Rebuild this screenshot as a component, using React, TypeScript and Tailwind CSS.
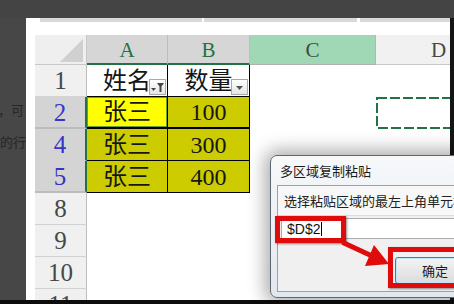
import React from "react";

const SERIF = "font-['Liberation_Serif','Noto_Sans_CJK_SC',serif]";
const CJK = "font-['Noto_Sans_CJK_SC',sans-serif]";

function RowHead({ n, sel = false, dbl = false }: { n: string; sel?: boolean; dbl?: boolean }) {
  const look = sel
    ? "bg-[#d4d4d4] text-[#3535c8] border-r-2 border-r-[#217346]"
    : "bg-[#f0f0f0] text-[#474747] border-r border-r-[#bdbdbd]";
  const bottom = dbl ? "border-b-2 border-b-[#bcbcbc]" : "border-b border-b-[#d2d2d2]";
  return (
    <div className={`w-[52px] h-full shrink-0 flex items-center justify-center ${look} ${bottom}`}>
      <span className={`${SERIF} text-[25px] leading-none`}>{n}</span>
    </div>
  );
}

function ColHead({ letter, w, kind }: { letter: string; w: string; kind: "sel" | "green" | "plain" }) {
  const look =
    kind === "sel"
      ? "bg-[#d6d6d6] text-[#217346] border-b-2 border-b-[#217346] border-r border-r-[#bdbdbd]"
      : kind === "green"
      ? "bg-[#a0d7b5] text-[#3b4f44] border-b border-b-[#b0b0b0] border-r border-r-[#b5b5b5]"
      : "bg-[#f1f1f1] text-[#474747] border-b border-b-[#c8c8c8] border-r border-r-[#c8c8c8]";
  return (
    <div className={`${w} h-full shrink-0 flex items-center justify-center ${look}`}>
      <span className={`${SERIF} text-[21px] leading-none pt-[2px]`}>{letter}</span>
    </div>
  );
}

function FilterBtn({ active }: { active?: boolean }) {
  return (
    <div className="absolute right-[1px] bottom-[1px] w-[17px] h-[16px] border border-[#a9a9a9] bg-gradient-to-b from-white to-[#e4e4e4] flex items-center justify-center">
      {active ? (
        <svg width="15" height="14" viewBox="0 0 15 14">
          <polygon points="1,8 6,8 3.5,11" fill="#444" />
          <polygon points="7,3 14,3 11.5,6.5 11.5,12 9.5,12 9.5,6.5" fill="#444" />
        </svg>
      ) : (
        <svg width="15" height="14" viewBox="0 0 15 14">
          <polygon points="4,6 11,6 7.5,10" fill="#555" />
        </svg>
      )}
    </div>
  );
}

function TCell({
  w,
  bg,
  text,
  dbl = false,
  ring = false,
  children,
}: {
  w: string;
  bg: string;
  text: string;
  dbl?: boolean;
  ring?: boolean;
  children?: React.ReactNode;
}) {
  const bottom = dbl ? "border-b-2" : "border-b";
  const r = ring ? "shadow-[inset_0_0_0_1px_#6f9a3a]" : "";
  return (
    <div className={`relative ${w} h-full shrink-0 ${bg} border-r border-r-black ${bottom} border-b-black flex items-center justify-center ${r}`}>
      <span className={`${SERIF} text-[24px] leading-none text-[#161616]`}>{text}</span>
      {children}
    </div>
  );
}

function Empty({ w, children }: { w: string; children?: React.ReactNode }) {
  return <div className={`relative ${w} h-full shrink-0 bg-white`}>{children}</div>;
}

export default function App() {
  return (
    <div className="relative w-[454px] h-[304px] overflow-hidden bg-[#474747] flex flex-col">
      <div className="h-[18px] shrink-0 bg-[#444444]" />
      <div className="flex flex-1 min-h-0">
        {/* background page text strip */}
        <div className={`w-[26px] shrink-0 overflow-hidden ${CJK} text-[13px] text-[#262626] pt-[76px]`}>
          <div className="whitespace-nowrap leading-[32px] -ml-[2px]">，可</div>
          <div className="whitespace-nowrap leading-[32px]">的行</div>
        </div>

        {/* Excel window */}
        <div className="flex-1 bg-white flex flex-col overflow-hidden">
          <div className="h-[4px] shrink-0 ml-[14px] bg-[#d9d9d9] flex">
            <div className="w-[162px] shrink-0" />
            <div className="w-[2px] shrink-0 bg-white" />
            <div className="w-[153px] shrink-0" />
            <div className="w-[3px] shrink-0 bg-white" />
          </div>
          <div className="h-[13px] shrink-0" />
          <div className="ml-[9px] flex flex-col">
            {/* column headers */}
            <div className="flex h-[30px] shrink-0">
              <div className="w-[52px] shrink-0 bg-[#efefef] border-r border-b border-[#c8c8c8] flex items-end justify-end pr-[3px] pb-[2px]">
                <svg width="23" height="23" viewBox="0 0 23 23">
                  <polygon points="23,0 23,23 0,23" fill="#d0d0d0" />
                </svg>
              </div>
              <ColHead letter="A" w="w-[81px]" kind="sel" />
              <ColHead letter="B" w="w-[82px]" kind="sel" />
              <ColHead letter="C" w="w-[126px]" kind="green" />
              <ColHead letter="D" w="w-[126px]" kind="plain" />
            </div>

            {/* row 1 */}
            <div className="flex h-[32px] shrink-0">
              <RowHead n="1" />
              <TCell w="w-[81px]" bg="bg-white" text="姓名">
                <FilterBtn active />
              </TCell>
              <TCell w="w-[82px]" bg="bg-white" text="数量">
                <FilterBtn />
              </TCell>
              <Empty w="w-[126px]" />
              <Empty w="w-[126px]" />
            </div>

            {/* row 2 */}
            <div className="flex h-[32px] shrink-0">
              <RowHead n="2" sel dbl />
              <TCell w="w-[81px]" bg="bg-[#ffff00]" text="张三" dbl ring />
              <TCell w="w-[82px]" bg="bg-[#cccc00]" text="100" dbl />
              <Empty w="w-[126px]" />
              <Empty w="w-[126px]">
                <svg className="absolute left-0 top-0" width="126" height="33" viewBox="0 0 126 33">
                  <rect x="1" y="1" width="140" height="30" fill="none" stroke="#217346" strokeWidth="2" strokeDasharray="10 3" />
                </svg>
              </Empty>
            </div>

            {/* row 4 */}
            <div className="flex h-[32px] shrink-0">
              <RowHead n="4" sel />
              <TCell w="w-[81px]" bg="bg-[#cccc00]" text="张三" />
              <TCell w="w-[82px]" bg="bg-[#cccc00]" text="300" />
              <Empty w="w-[126px]" />
              <Empty w="w-[126px]" />
            </div>

            {/* row 5 */}
            <div className="flex h-[32px] shrink-0">
              <RowHead n="5" sel dbl />
              <TCell w="w-[81px]" bg="bg-[#cccc00]" text="张三" />
              <TCell w="w-[82px]" bg="bg-[#cccc00]" text="400" />
              <Empty w="w-[126px]" />
              <Empty w="w-[126px]" />
            </div>

            {["8", "9", "10", "11"].map((n) => (
              <div key={n} className="flex h-[32px] shrink-0">
                <RowHead n={n} />
                <Empty w="w-[81px]" />
                <Empty w="w-[82px]" />
                <Empty w="w-[126px]" />
                <Empty w="w-[126px]" />
              </div>
            ))}
          </div>
        </div>
        <div className="w-[4px] shrink-0 bg-[#151515]" />
      </div>
      <div className="h-[4px] shrink-0 bg-[#0c0c0c]" />

      {/* Dialog */}
      <div className="absolute left-[270px] top-[155px] w-[210px] h-[143px] rounded-l-[7px] border border-[#5d6570] bg-gradient-to-b from-[#f6f8fa] to-[#e2e8ef] shadow-[0_0_18px_5px_rgba(0,0,0,0.33)] flex flex-col">
        <div className={`h-[29px] shrink-0 flex items-center pl-[9px] ${CJK} text-[13px] leading-none text-[#1a1a1a]`}>
          多区域复制粘贴
        </div>
        <div className="flex-1 ml-[6px] mb-[5px] border border-[#98a2ad] bg-[#f0f0f0] flex flex-col">
          <div className={`h-[30px] shrink-0 bg-[#f7f7f7] border-b border-[#dcdcdc] flex items-center pl-[6px] ${CJK} text-[13px] leading-none text-[#222] whitespace-nowrap overflow-hidden`}>
            选择粘贴区域的最左上角单元格
          </div>
          <div className="h-[21px] mt-[2px] ml-[3px] shrink-0 bg-white border border-[#abadb3] flex items-center pl-[5px]">
            <span className="font-['Liberation_Sans',sans-serif] text-[14px] leading-none text-[#111]">$D$2</span>
            <span className="w-[1px] h-[14px] bg-black ml-[1px]" />
          </div>
          <div className="h-[18px] shrink-0" />
          <div className="ml-[117px] w-[80px] h-[27px] shrink-0 rounded-[3px] border border-[#3c7fb1] shadow-[inset_0_0_0_1px_#bfe4f8] bg-gradient-to-b from-[#f4f4f4] to-[#dcdcdc] flex items-center justify-center">
            <span className={`${CJK} text-[13px] leading-none text-[#1a1a1a]`}>确定</span>
          </div>
        </div>
      </div>

      {/* Red annotation boxes */}
      <div className="absolute left-[275px] top-[216px] w-[71px] h-[27px] border-[5px] border-[#e00b0b] shadow-[1px_1px_2px_rgba(0,0,0,0.45)]" />
      <div className="absolute left-[388px] top-[247px] w-[80px] h-[41px] border-[5px] border-[#e00b0b] shadow-[1px_1px_2px_rgba(0,0,0,0.45)]" />

      {/* Red arrow */}
      <svg className="absolute left-0 top-0 pointer-events-none" width="454" height="304" viewBox="0 0 454 304">
        <line x1="344" y1="243" x2="372" y2="256" stroke="#e00b0b" strokeWidth="5" strokeLinecap="round" />
        <polygon points="389,264 365,266 374,245" fill="#e00b0b" />
      </svg>
    </div>
  );
}
